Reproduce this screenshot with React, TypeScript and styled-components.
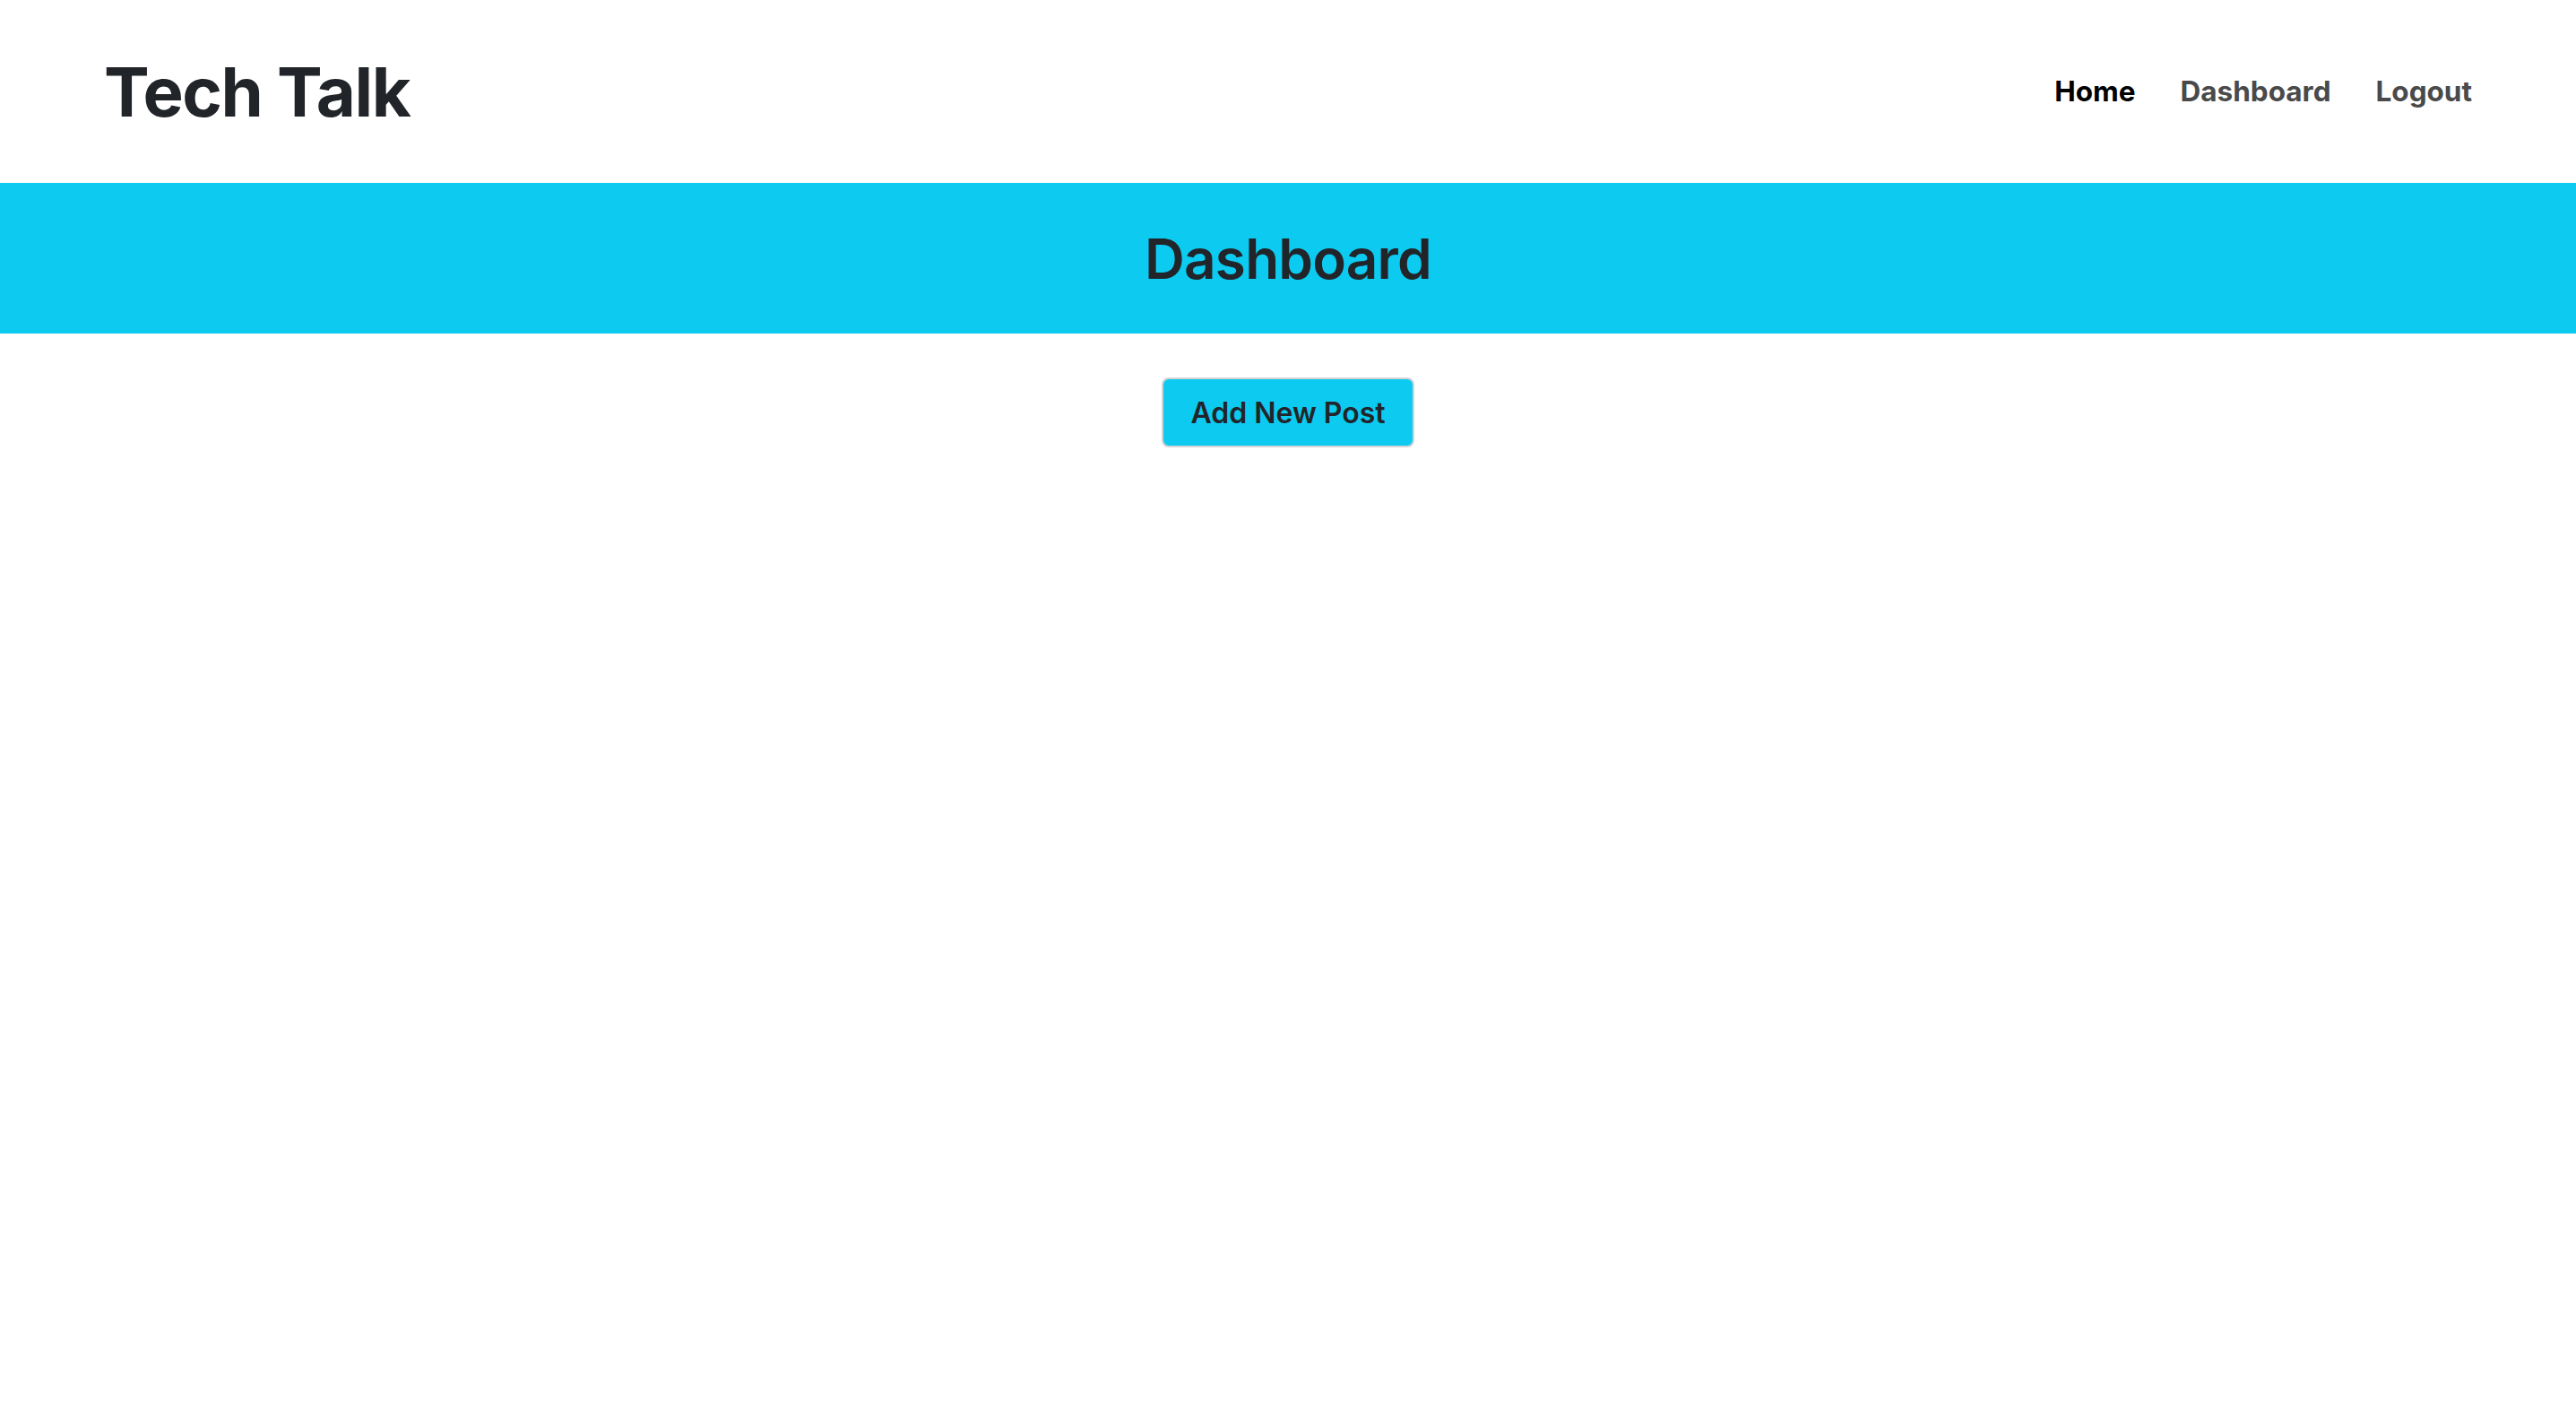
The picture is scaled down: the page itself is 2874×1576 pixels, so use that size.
import React from "react";
import styled, { createGlobalStyle } from "styled-components";

const Global = createGlobalStyle`
  html, body {
    margin: 0;
    padding: 0;
    background: #ffffff;
    font-family: Inter, "Noto Sans", "Liberation Sans", sans-serif;
    color: #212529;
  }
  * { box-sizing: border-box; }
`;

const Header = styled.header`
  height: 204px;
  padding: 0 116px;
  display: flex;
  align-items: center;
  justify-content: space-between;
  background: #ffffff;
`;

const Brand = styled.a`
  font-size: 76px;
  font-weight: 700;
  letter-spacing: -1.4px;
  color: #212529;
  text-decoration: none;
  line-height: 1;
`;

const Nav = styled.nav`
  display: flex;
  align-items: center;
  gap: 50px;
`;

const NavLink = styled.a<{ $active?: boolean }>`
  font-size: 31.5px;
  font-weight: 700;
  color: ${(p) => (p.$active ? "#000000" : "#4a4a4a")};
  text-decoration: none;
  line-height: 1;
`;

const Banner = styled.section`
  height: 168px;
  padding-top: 2px;
  background: #0dcaf0;
  display: flex;
  align-items: center;
  justify-content: center;
`;

const Title = styled.h1`
  margin: 0;
  font-size: 62px;
  font-weight: 600;
  letter-spacing: -0.8px;
  color: #212529;
  line-height: 1;
`;

const Main = styled.main`
  display: flex;
  justify-content: center;
  padding-top: 49px;
`;

const AddButton = styled.button`
  width: 282px;
  height: 78px;
  background: #0dcaf0;
  border: 2px solid #d4d4d4;
  border-radius: 8px;
  font-family: Inter, "Noto Sans", sans-serif;
  font-size: 32px;
  font-weight: 600;
  color: #212529;
  cursor: pointer;
`;

export default function App() {
  return (
    <>
      <Global />
      <Header>
        <Brand href="#">Tech Talk</Brand>
        <Nav>
          <NavLink href="#" $active>Home</NavLink>
          <NavLink href="#">Dashboard</NavLink>
          <NavLink href="#">Logout</NavLink>
        </Nav>
      </Header>
      <Banner>
        <Title>Dashboard</Title>
      </Banner>
      <Main>
        <AddButton>Add New Post</AddButton>
      </Main>
    </>
  );
}
